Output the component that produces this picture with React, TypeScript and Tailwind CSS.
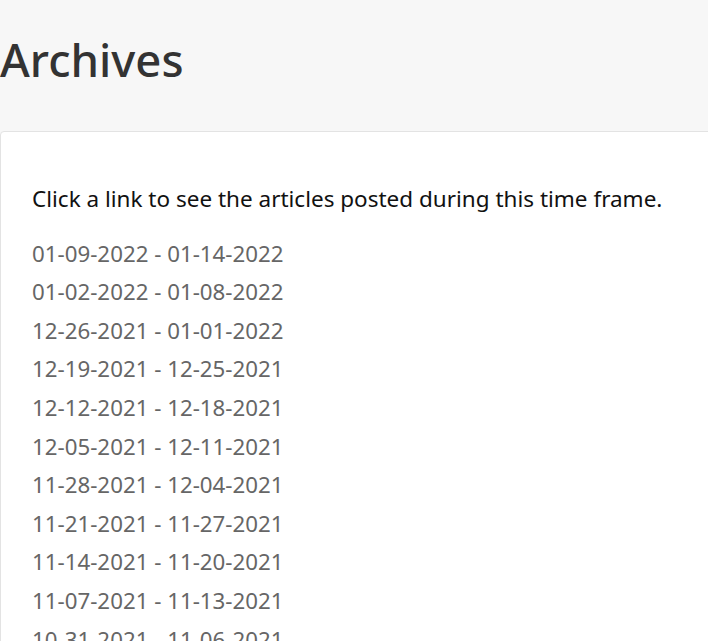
const ranges = [
  '01-09-2022 - 01-14-2022',
  '01-02-2022 - 01-08-2022',
  '12-26-2021 - 01-01-2022',
  '12-19-2021 - 12-25-2021',
  '12-12-2021 - 12-18-2021',
  '12-05-2021 - 12-11-2021',
  '11-28-2021 - 12-04-2021',
  '11-21-2021 - 11-27-2021',
  '11-14-2021 - 11-20-2021',
  '11-07-2021 - 11-13-2021',
  '10-31-2021 - 11-06-2021',
];

export default function App() {
  return (
    <div className="h-screen bg-[#f7f7f7] font-['Noto_Sans',sans-serif] overflow-hidden">
      <header className="h-[131px] flex items-center">
        <h1 className="text-[45.5px] font-medium leading-none text-[#333333] mt-[-12px]">Archives</h1>
      </header>
      <main className="bg-white border border-[#e3e3e3] rounded-tl-[4px] mr-[-8px] px-[31px] pt-[52px] pb-8">
        <p className="text-[22.5px] leading-[30px] text-[#111111] mb-[20px]">
          Click a link to see the articles posted during this time frame.
        </p>
        <ul className="flex flex-col">
          {ranges.map((r) => (
            <li key={r} className="h-[38.6px] flex items-center">
              <a href="#" className="text-[22.3px] text-[#666666]">
                {r}
              </a>
            </li>
          ))}
        </ul>
      </main>
    </div>
  );
}
